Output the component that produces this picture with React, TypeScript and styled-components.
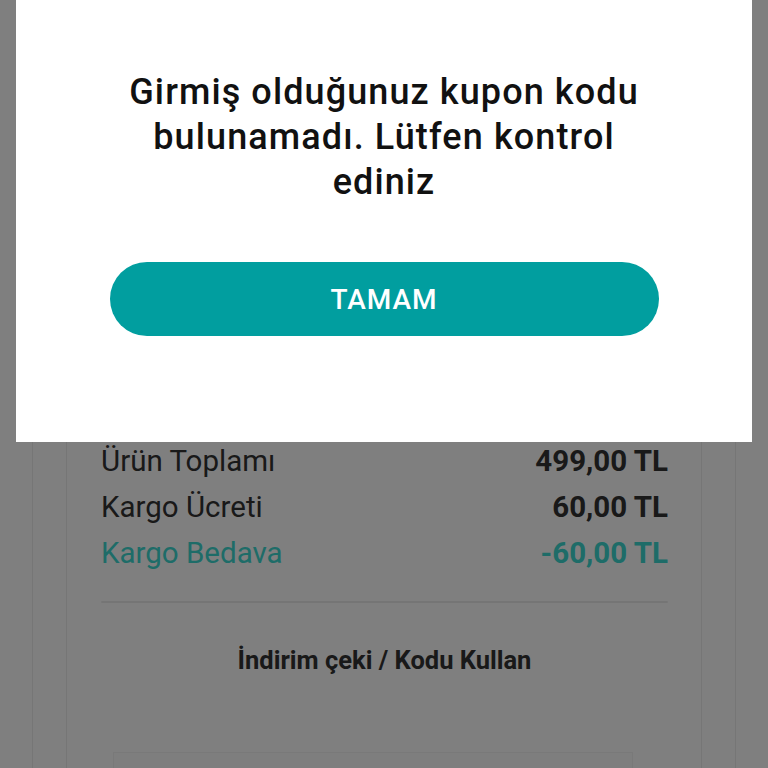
import React from "react";
import styled, { createGlobalStyle } from "styled-components";

const Global = createGlobalStyle`
  html, body { margin: 0; padding: 0; background: #ffffff; }
  body { font-family: Roboto, "Noto Sans", sans-serif; width: 768px; height: 768px; overflow: hidden; position: relative; }
`;

const Screen = styled.div`
  position: relative;
  width: 768px;
  height: 768px;
  overflow: hidden;
  background: #ffffff;
`;

const Frame = styled.div`
  margin: 0 32px 0 32px;
  height: 100%;
  border-left: 1px solid #ececec;
  border-right: 1px solid #ececec;
  box-sizing: border-box;
  padding: 0 33px;
`;

const Card = styled.div`
  height: 100%;
  border-left: 1px solid #ececec;
  border-right: 1px solid #ececec;
  box-sizing: border-box;
  padding: 438px 33px 0 34px;
  display: flex;
  flex-direction: column;
`;

const Row = styled.div<{ $accent?: boolean }>`
  flex-shrink: 0;
  display: flex;
  justify-content: space-between;
  align-items: center;
  height: 46px;
  font-size: 29.5px;
  color: ${(p) => (p.$accent ? "#3cd8d0" : "#333333")};
`;

const Amount = styled.span`
  font-weight: 700;
`;

const Divider = styled.div`
  flex-shrink: 0;
  margin-top: 25px;
  height: 2px;
  background: #ebebeb;
  border-radius: 1px;
`;

const CouponLink = styled.div`
  flex-shrink: 0;
  margin-top: 42px;
  line-height: 30px;
  text-align: center;
  font-size: 25.5px;
  font-weight: 700;
  color: #333333;
`;

const InputBox = styled.div`
  flex-shrink: 0;
  margin: 77px 35px 0 12px;
  height: 60px;
  border: 1px solid #f2f2f2;
  background: #fcfcfc;
`;

const Scrim = styled.div`
  position: absolute;
  inset: 0;
  background: rgba(0, 0, 0, 0.5);
`;

const Dialog = styled.div`
  position: absolute;
  top: 0;
  left: 16px;
  width: 736px;
  height: 442px;
  background: #ffffff;
  display: flex;
  flex-direction: column;
  align-items: center;
  padding-top: 70px;
  box-sizing: border-box;
`;

const Message = styled.div`
  width: 540px;
  text-align: center;
  font-size: 36px;
  line-height: 45px;
  letter-spacing: 1.1px;
  font-weight: 500;
  color: #111111;
`;

const OkButton = styled.button`
  margin-top: 57px;
  width: 549px;
  height: 74px;
  border: none;
  border-radius: 37px;
  background: #019e9f;
  color: #ffffff;
  font-family: Roboto, "Noto Sans", sans-serif;
  font-size: 28px;
  font-weight: 500;
  letter-spacing: 1px;
`;

export default function App() {
  return (
    <Screen>
      <Global />
      <Frame>
        <Card>
          <Row>
            <span>Ürün Toplamı</span>
            <Amount>499,00 TL</Amount>
          </Row>
          <Row>
            <span>Kargo Ücreti</span>
            <Amount>60,00 TL</Amount>
          </Row>
          <Row $accent>
            <span>Kargo Bedava</span>
            <Amount>-60,00 TL</Amount>
          </Row>
          <Divider />
          <CouponLink>İndirim çeki / Kodu Kullan</CouponLink>
          <InputBox />
        </Card>
      </Frame>
      <Scrim />
      <Dialog>
        <Message>Girmiş olduğunuz kupon kodu bulunamadı. Lütfen kontrol ediniz</Message>
        <OkButton>TAMAM</OkButton>
      </Dialog>
    </Screen>
  );
}
